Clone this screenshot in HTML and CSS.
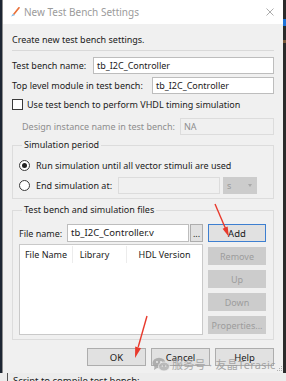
FILE: index.html
```html
<!DOCTYPE html>
<html lang="en">
<head>
    <meta charset="UTF-8">
    <meta name="viewport" content="width=device-width, initial-scale=1.0">
    <title>New Test Bench Settings</title>
    <link rel="stylesheet" href="styles.css">
</head>
<body>
    <div class="screen">
        <div class="desk-row">
            <div class="edge-left"></div>

            <div class="window">
                <div class="titlebar">
                    <svg class="app-icon" width="9" height="10" viewBox="0 0 9 10">
                        <line x1="8" y1="0.8" x2="3" y2="7" stroke="#e9713a" stroke-width="1.7" stroke-linecap="round"/>
                        <polygon points="0,9.5 2,6.8 3.8,8.3" fill="#7db9e6"/>
                    </svg>
                    <span class="title">New Test Bench Settings</span>
                    <svg class="close-icon" width="8" height="8" viewBox="0 0 8 8">
                        <path d="M0.5 0.5 L7.5 7.5 M7.5 0.5 L0.5 7.5" stroke="#a3a3a3" stroke-width="0.9"/>
                    </svg>
                </div>

                <div class="content">
                    <p class="intro">Create new test bench settings.</p>
                    <div class="separator"></div>

                    <div class="form-row first">
                        <span class="label w-name">Test bench name:</span>
                        <div class="edit">tb_I2C_Controller</div>
                    </div>
                    <div class="form-row tight">
                        <span class="label w-top">Top level module in test bench:</span>
                        <div class="edit">tb_I2C_Controller</div>
                    </div>
                    <div class="form-row check-row">
                        <span class="checkbox"></span>
                        <span>Use test bench to perform VHDL timing simulation</span>
                    </div>
                    <div class="form-row indent disabled">
                        <span class="label w-design">Design instance name in test bench:</span>
                        <div class="edit off">NA</div>
                    </div>

                    <fieldset class="group period">
                        <legend>Simulation period</legend>
                        <div class="form-row">
                            <span class="radio checked"></span>
                            <span>Run simulation until all vector stimuli are used</span>
                        </div>
                        <div class="form-row tight">
                            <span class="radio"></span>
                            <span class="label w-end">End simulation at:</span>
                            <div class="edit off end-time"></div>
                            <div class="combo">s<span class="caret"></span></div>
                        </div>
                    </fieldset>

                    <fieldset class="group files">
                        <legend>Test bench and simulation files</legend>
                        <div class="form-row file-row">
                            <span class="label w-file">File name:</span>
                            <div class="edit">tb_I2C_Controller.v</div>
                            <button class="btn dots">...</button>
                            <button class="btn side focus">Add</button>
                        </div>
                        <div class="list-area">
                            <div class="file-list">
                                <div class="list-head">
                                    <span class="col col-name">File Name</span>
                                    <span class="col col-lib">Library</span>
                                    <span class="col col-hdl">HDL Version</span>
                                </div>
                            </div>
                            <div class="side-buttons">
                                <button class="btn side" disabled>Remove</button>
                                <button class="btn side" disabled>Up</button>
                                <button class="btn side" disabled>Down</button>
                                <button class="btn side" disabled>Properties...</button>
                            </div>
                        </div>
                    </fieldset>

                    <div class="dialog-buttons">
                        <button class="btn">OK</button>
                        <button class="btn">Cancel</button>
                        <button class="btn">Help</button>
                    </div>
                </div>
            </div>

            <div class="edge-right">
                <div class="task-blue"></div>
                <div class="task-brown"></div>
            </div>
        </div>

        <div class="behind">
            <span class="behind-text">Script to compile test bench:</span>
        </div>

        <!-- size grip in the dialog corner -->
        <svg class="grip" width="6" height="6" viewBox="0 0 6 6">
            <rect x="4" y="0" width="1" height="1" fill="#b0b0b0"/>
            <rect x="2" y="2" width="1" height="1" fill="#b0b0b0"/>
            <rect x="4" y="2" width="1" height="1" fill="#b0b0b0"/>
            <rect x="0" y="4" width="1" height="1" fill="#b0b0b0"/>
            <rect x="2" y="4" width="1" height="1" fill="#b0b0b0"/>
            <rect x="4" y="4" width="1" height="1" fill="#b0b0b0"/>
        </svg>

        <!-- annotation arrows drawn over the screenshot -->
        <svg class="arrows" width="286" height="381" viewBox="0 0 286 381">
            <line x1="215" y1="204" x2="225.5" y2="228.5" stroke="#e8392c" stroke-width="1.4"/>
            <polygon points="229,237 227.6,226.6 222.6,228.8" fill="#e8392c"/>
            <line x1="147" y1="316" x2="138.2" y2="347" stroke="#e8392c" stroke-width="1.4"/>
            <polygon points="135,358 141,348.2 135.2,346.6" fill="#e8392c"/>
        </svg>

        <div class="watermark">
            <svg class="wechat" width="18" height="15" viewBox="0 0 18 15">
                <ellipse cx="7" cy="6" rx="6.5" ry="5.3" fill="#a6a6a6"/>
                <polygon points="2.5,9.5 2,13 5.5,10.8" fill="#a6a6a6"/>
                <ellipse cx="12" cy="9.5" rx="5.5" ry="4.5" fill="#b4b4b4" stroke="#f0f0f0" stroke-width="0.8"/>
                <circle cx="5" cy="5" r="0.9" fill="#f0f0f0"/>
                <circle cx="9" cy="5" r="0.9" fill="#f0f0f0"/>
                <circle cx="10.3" cy="9" r="0.7" fill="#f0f0f0"/>
                <circle cx="13.7" cy="9" r="0.7" fill="#f0f0f0"/>
            </svg>
            <span class="wm-text">服务号 · 友晶Terasic</span>
        </div>
    </div>
</body>
</html>
```

FILE: styles.css
```css
* {
    box-sizing: border-box;
}

body {
    margin: 0;
    width: 286px;
    height: 381px;
    overflow: hidden;
    background: #262626;
    font-family: "Noto Sans", "Open Sans", sans-serif;
    font-size: 9px;
    color: #1b1b1b;
}

.screen {
    position: relative;
    width: 286px;
    height: 381px;
    display: flex;
    flex-direction: column;
}

.desk-row {
    display: flex;
    height: 373px;
}

.edge-left {
    width: 2px;
    background: #1d2633;
}

.edge-right {
    width: 3px;
    background: #2b2b2b;
    display: flex;
    flex-direction: column;
}

.task-blue {
    margin-top: 19px;
    height: 7px;
    background: #1e73d8;
}

.task-brown {
    margin-top: 14px;
    height: 3px;
    background: #7a5a3a;
}

.window {
    width: 281px;
    background: #f0f0f0;
    border-left: 1px solid #8d8d8d;
    display: flex;
    flex-direction: column;
}

/* title bar */
.titlebar {
    height: 24px;
    background: #fff;
    display: flex;
    align-items: center;
    padding: 0 9px 0 8px;
}

.app-icon {
    margin-right: 4px;
}

.title {
    flex: 1;
    font-size: 10px;
    color: #9b9b9b;
}

/* dialog content */
.content {
    padding: 0 9px;
    display: flex;
    flex-direction: column;
}

.intro {
    margin: 0;
    padding-top: 9px;
    line-height: 14px;
}

.separator {
    margin-top: 3px;
    border-top: 1px solid #d9d9d9;
}

.form-row {
    display: flex;
    align-items: center;
    height: 17px;
    white-space: nowrap;
}

.form-row.first {
    margin-top: 6px;
}

.form-row.tight {
    margin-top: 3px;
}

.form-row.check-row {
    margin-top: 2px;
}

.form-row.indent {
    margin-top: 5px;
    padding-left: 10px;
}

.disabled {
    color: #8e8e8e;
}

.label {
    flex-shrink: 0;
}

.w-name { width: 81px; }
.w-top { width: 140px; }
.w-design { width: 158px; }
.w-end { width: 82px; }
.w-file { width: 48px; }

.edit {
    flex: 1;
    height: 17px;
    line-height: 15px;
    padding: 0 3px;
    background: #fff;
    border: 1px solid #bdbdbd;
    color: #1b1b1b;
}

.edit.off {
    background: #f0f0f0;
    border-color: #dcdcdc;
    color: #8e8e8e;
}

.checkbox {
    width: 11px;
    height: 11px;
    border: 1px solid #3a3a3a;
    background: #fff;
    margin-right: 4px;
}

.radio {
    width: 11px;
    height: 11px;
    border: 1px solid #3a3a3a;
    border-radius: 50%;
    background: #fff;
    margin-right: 6px;
    display: flex;
    align-items: center;
    justify-content: center;
}

.radio.checked::after {
    content: "";
    width: 5px;
    height: 5px;
    border-radius: 50%;
    background: #222;
}

/* group boxes */
.group {
    margin: 3px 0 0;
    padding: 5px 7px 4px 6px;
    border: 1px solid #dcdcdc;
    min-width: 0;
}

.group legend {
    padding: 0 2px;
    margin-left: 3px;
    line-height: 14px;
}

.end-time {
    flex: none;
    width: 102px;
}

.combo {
    width: 34px;
    height: 17px;
    margin-left: 3px;
    background: #cccccc;
    color: #9a9a9a;
    line-height: 17px;
    padding-left: 4px;
    display: flex;
    align-items: center;
    justify-content: space-between;
    padding-right: 5px;
}

.caret {
    width: 0;
    height: 0;
    border-left: 2.5px solid transparent;
    border-right: 2.5px solid transparent;
    border-top: 3px solid #a8a8a8;
}

.files {
    margin-top: 4px;
    padding-top: 7px;
}

.file-row {
    height: 18px;
}

.file-row .edit {
    height: 18px;
    line-height: 16px;
    font-size: 9.5px;
}

.btn {
    font-family: inherit;
    font-size: 9px;
    color: #1b1b1b;
    background: #e1e1e1;
    border: 1px solid #adadad;
    padding: 0;
    height: 18px;
    cursor: default;
}

.btn.dots {
    width: 13px;
    margin-left: 1px;
    flex-shrink: 0;
}

.btn.side {
    width: 58px;
    flex-shrink: 0;
}

.file-row .btn.side {
    margin-left: 5px;
    font-size: 9.5px;
}

.btn.focus {
    border-color: #3d7fd0;
}

.btn:disabled {
    background: #cccccc;
    border-color: #cccccc;
    color: #9c9c9c;
}

.list-area {
    display: flex;
    margin-top: 2px;
}

.file-list {
    flex: 1;
    height: 91px;
    background: #fff;
    border: 1px solid #c9c9c9;
}

.list-head {
    display: flex;
    height: 18px;
    align-items: center;
}

.col {
    height: 17px;
    line-height: 17px;
    text-align: center;
    border-right: 1px solid #ececec;
}

.col-name { width: 53px; }
.col-lib { width: 54px; padding-right: 10px; }
.col-hdl { width: 75px; border-right: none; }

.side-buttons {
    display: flex;
    flex-direction: column;
    gap: 5px;
    margin-left: 5px;
    padding-top: 3px;
}

.dialog-buttons {
    display: flex;
    justify-content: flex-end;
    gap: 5px;
    margin-top: 8px;
}

.dialog-buttons .btn {
    width: 59px;
    font-size: 9.5px;
}

/* window behind the dialog */
.behind {
    flex: 1;
    background: #ececec;
    padding-left: 7px;
    overflow: hidden;
}

.behind-text {
    display: block;
    height: 100%;
    border-left: 1px solid #555;
    padding-top: 2px;
    padding-left: 5px;
    font-size: 9.5px;
    line-height: 12px;
    color: #222;
}

/* overlays */
.grip {
    position: absolute;
    left: 277px;
    top: 366px;
}

.arrows {
    position: absolute;
    left: 0;
    top: 0;
    pointer-events: none;
}

.watermark {
    position: absolute;
    left: 152px;
    top: 356px;
    display: flex;
    align-items: center;
    gap: 2px;
    opacity: 0.85;
    pointer-events: none;
}

.wm-text {
    font-family: "Noto Sans", "Noto Sans CJK SC", sans-serif;
    font-size: 11px;
    color: #9a9a9a;
    letter-spacing: 0.3px;
}
```
